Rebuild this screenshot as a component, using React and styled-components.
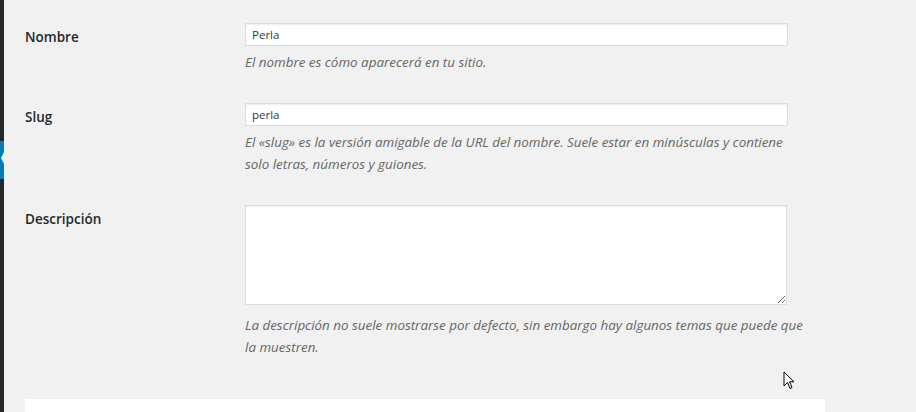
import React from "react"
import styled, { createGlobalStyle } from "styled-components"

const GlobalStyle = createGlobalStyle`
  html, body {
    margin: 0;
    padding: 0;
    background: #f1f1f1;
    height: 100%;
    overflow: hidden;
  }
  #root {
    height: 100%;
  }
`

const fields = [
  {
    label: "Nombre",
    value: "Perla",
    help: "El nombre es cómo aparecerá en tu sitio.",
  },
  {
    label: "Slug",
    value: "perla",
    help:
      "El «slug» es la versión amigable de la URL del nombre. Suele estar en minúsculas y contiene solo letras, números y guiones.",
  },
  {
    label: "Descripción",
    multiline: true,
    help:
      "La descripción no suele mostrarse por defecto, sin embargo hay algunos temas que puede que la muestren.",
  },
]

const App = () => {
  return (
    <Screen>
      <GlobalStyle />
      <MenuEdge>
        <CurrentMark />
      </MenuEdge>
      <Main>
        <FormTable>
          {fields.map((f) => (
            <Row key={f.label}>
              <Label $multiline={f.multiline}>{f.label}</Label>
              <Field>
                {f.multiline ? (
                  <TextArea defaultValue="" />
                ) : (
                  <Input type="text" defaultValue={f.value} />
                )}
                <Help $multiline={f.multiline}>{f.help}</Help>
              </Field>
            </Row>
          ))}
        </FormTable>
        <Panel />
      </Main>
      <Pointer viewBox="0 0 12 19" width="12" height="19">
        <path
          d="M1 1 L1 15 L4.5 11.5 L7 17.5 L9 16.6 L6.6 10.8 L11 10.8 Z"
          fill="#fff"
          stroke="#000"
          strokeWidth="1"
          strokeLinejoin="miter"
        />
      </Pointer>
    </Screen>
  )
}

const Screen = styled.div`
  position: relative;
  display: flex;
  height: 100%;
  overflow: hidden;
  font-family: "Open Sans", "Noto Sans", sans-serif;
  color: #23282d;
`

const MenuEdge = styled.div`
  width: 4px;
  flex-shrink: 0;
  background: #23282d;
  position: relative;
`

const CurrentMark = styled.div`
  position: absolute;
  top: 141px;
  left: 0;
  width: 4px;
  height: 38px;
  background: #0a7bb0;

  &::after {
    content: "";
    position: absolute;
    right: 0;
    top: 11px;
    border: 6px solid transparent;
    border-right: 3px solid #f1f1f1;
    border-left: 0;
  }
`

const Main = styled.div`
  flex: 1;
  padding: 8px 0 0 21px;
`

const FormTable = styled.div`
  display: flex;
  flex-direction: column;
`

const Row = styled.div`
  display: grid;
  grid-template-columns: 220px 562px;
`

const Label = styled.div`
  padding: 20px 0;
  font-size: 13.5px;
  font-weight: 600;
  line-height: 18px;
`

const Field = styled.div`
  padding: 15px 0;
  display: flex;
  flex-direction: column;
`

const Input = styled.input`
  box-sizing: border-box;
  width: 543px;
  height: 23px;
  margin: 0;
  padding: 0 6px;
  border: 1px solid #dddddd;
  background: #fff;
  box-shadow: inset 0 1px 2px rgba(0, 0, 0, 0.07);
  font-family: "Open Sans", "Noto Sans", sans-serif;
  font-size: 11.5px;
  color: #32373c;
  outline: none;
`

const TextArea = styled.textarea`
  box-sizing: border-box;
  width: 542px;
  height: 100px;
  margin: 0;
  border: 1px solid #dddddd;
  background: #fff;
  box-shadow: inset 0 1px 2px rgba(0, 0, 0, 0.07);
  resize: both;
  outline: none;
`

const Help = styled.p`
  margin: ${(p) => (p.$multiline ? "9px" : "5px")} 0 0;
  font-size: 13.4px;
  font-style: italic;
  line-height: 22px;
  color: #666;
`

const Panel = styled.div`
  margin-top: 26px;
  width: 800px;
  height: 13px;
  background: #fff;
`

const Pointer = styled.svg`
  position: absolute;
  left: 783px;
  top: 371px;
`

export default App
